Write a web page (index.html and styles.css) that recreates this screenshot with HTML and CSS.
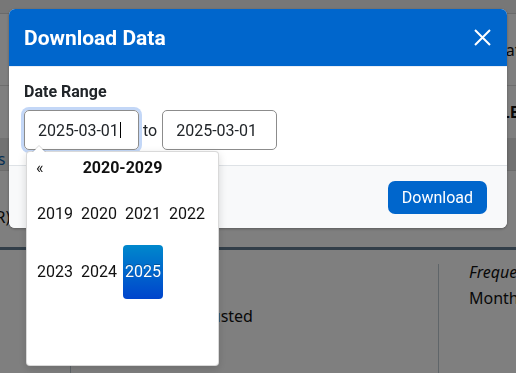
FILE: index.html
```html
<!DOCTYPE html>
<html lang="en">
<head>
    <meta charset="UTF-8">
    <title>Download Data</title>
    <link rel="stylesheet" href="styles.css">
</head>
<body>
    <div id="page">
        <div class="topbar"></div>
        <div class="thead"><span>Date</span></div>
        <div class="trow"><span>TABLE</span></div>
        <div class="tabs"><a class="tab_link" href="#">Details</a></div>
        <div class="units"><span>(USD/EUR)</span></div>
        <div class="rule"></div>
        <div class="cols">
            <div class="col_a"></div>
            <div class="col_b">Seasonally Adjusted</div>
            <div class="col_c">
                <em>Frequency</em>
                <div>Monthly</div>
            </div>
        </div>
    </div>

    <div class="backdrop"></div>

    <!-- 모달 -->
    <div class="modal">
        <header class="modal_header">
            <h5 class="modal_title">Download Data</h5>
            <button class="close" type="button">
                <svg width="17" height="17" viewBox="0 0 17 17">
                    <path d="M1 1 L16 16 M16 1 L1 16" stroke="#fff" stroke-width="2" fill="none"/>
                </svg>
            </button>
        </header>
        <div class="modal_body">
            <label class="range_label">Date Range</label>
            <div class="range">
                <div class="field focus">2025-03-01<span class="caret"></span></div>
                <span class="to">to</span>
                <div class="field">2025-03-01</div>
            </div>
        </div>
        <footer class="modal_footer">
            <button class="btn" type="button">Download</button>
        </footer>
    </div>

    <!-- 달력 (연도 선택) -->
    <div class="datepicker">
        <div class="dp_head">
            <span class="prev">&laquo;</span>
            <span class="switch">2020-2029</span>
            <span class="next"></span>
        </div>
        <div class="years">
            <span class="year">2019</span>
            <span class="year">2020</span>
            <span class="year">2021</span>
            <span class="year">2022</span>
            <span class="year">2023</span>
            <span class="year">2024</span>
            <span class="year active">2025</span>
        </div>
    </div>
</body>
</html>
```

FILE: styles.css
```css
/* 초기화 */
body {
    margin: 0;
    width: 516px;
    height: 373px;
    overflow: hidden;
    font-family: Roboto, "Liberation Sans", sans-serif;
    font-size: 16px;
    color: #212529;
}
a {text-decoration: none;}

/* 뒤 페이지 */
#page {
    width: 516px;
    font-family: "Noto Sans", "Liberation Sans", sans-serif;
    color: #111;
    background: #fff;
}
.topbar {
    height: 13px;
    background: #eeeeee;
    border-bottom: 1px solid #d4d4d4;
}
.thead {
    height: 71px;
    display: flex;
    align-items: center;
    padding-left: 494px;
    white-space: nowrap;
    border-bottom: 1px solid #dddddd;
}
.trow {
    height: 52px;
    padding-left: 471px;
    display: flex;
    align-items: center;
    font-weight: bold;
    white-space: nowrap;
}
.tabs {
    height: 32px;
    background: #e4e4e4;
    border-bottom: 1px solid #d8d8d8;
    display: flex;
    align-items: flex-end;
    white-space: nowrap;
}
.tab_link {
    color: #0b5fa8;
    margin-left: -46px;
    line-height: 18px;
    padding-bottom: 2px;
}
.units {
    height: 73px;
    padding-top: 18px;
    box-sizing: border-box;
    display: flex;
    align-items: center;
    white-space: nowrap;
}
.units span {margin-left: -68px;}
.rule {
    height: 3px;
    background: #647d92;
    margin-top: 3px;
}
.cols {
    display: flex;
    height: 130px;
    margin-top: 9px;
}
.col_a {
    flex-shrink: 0;
    width: 70px;
    margin-top: 5px;
    border-right: 1px solid #bfcbd2;
}
.col_b {
    flex-shrink: 0;
    width: 368px;
    margin-top: 5px;
    padding: 39px 0 0 32px;
    box-sizing: border-box;
    line-height: 26px;
    border-right: 1px solid #bfcbd2;
}
.col_c {
    padding-left: 30px;
    line-height: 26px;
    white-space: nowrap;
}

.backdrop {
    position: fixed;
    inset: 0;
    background: rgba(0, 0, 0, 0.5);
}

/* 모달 */
.modal {
    position: fixed;
    left: 9px;
    top: 9px;
    width: 498px;
    background: #fff;
    border-radius: 6px;
    overflow: hidden;
    box-shadow: 0 1px 3px rgba(0, 0, 0, 0.3);
}
.modal_header {
    height: 57px;
    background: #0066cc;
    display: flex;
    align-items: center;
    justify-content: space-between;
    padding: 0 16px 0 15px;
    border-bottom: 1px solid #e8eef6;
}
.modal_title {
    margin: 0;
    color: #fff;
    font-size: 21px;
    font-weight: bold;
}
.close {
    border: 0;
    background: none;
    padding: 0;
    width: 17px;
    height: 17px;
    display: block;
}
.close svg {display: block;}
.modal_body {
    padding: 15px 15px 15px;
}
.range_label {
    display: block;
    font-weight: bold;
    line-height: 19px;
    margin-bottom: 9px;
}
.range {
    display: flex;
    align-items: center;
}
.field {
    width: 115px;
    height: 40px;
    box-sizing: border-box;
    border: 1px solid #8c8c8c;
    border-radius: 5px;
    padding-left: 13px;
    display: flex;
    align-items: center;
    color: #212529;
}
.field.focus {
    box-shadow: 0 0 0 3px #c3d7f7;
}
.caret {
    width: 1px;
    height: 16px;
    background: #000;
    margin-left: 1px;
}
.to {margin: 0 5px 0 4px;}
.modal_footer {
    height: 62px;
    background: #f8f9fa;
    border-top: 1px solid #dee2e6;
    display: flex;
    align-items: center;
    justify-content: flex-end;
    padding-right: 20px;
}
.btn {
    height: 33px;
    padding: 0 14px;
    border: 0;
    border-radius: 7px;
    background: #0066cc;
    color: #fff;
    font-family: Roboto, sans-serif;
    font-size: 16px;
}

/* 달력 */
.datepicker {
    position: fixed;
    left: 26px;
    top: 151px;
    width: 193px;
    height: 215px;
    box-sizing: border-box;
    padding: 4px;
    background: #fff;
    border: 1px solid rgba(0, 0, 0, 0.15);
    border-radius: 4px;
    box-shadow: 0 3px 8px rgba(0, 0, 0, 0.15);
    color: #111;
}
/* 위쪽 화살표 */
.datepicker::before {
    content: '';
    position: absolute;
    top: -7px;
    left: 5px;
    border-left: 7px solid transparent;
    border-right: 7px solid transparent;
    border-bottom: 7px solid rgba(0, 0, 0, 0.15);
}
.datepicker::after {
    content: '';
    position: absolute;
    top: -6px;
    left: 6px;
    border-left: 6px solid transparent;
    border-right: 6px solid transparent;
    border-bottom: 6px solid #fff;
}
.dp_head {
    height: 22px;
    margin-bottom: 7px;
    display: grid;
    grid-template-columns: 30px 1fr 30px;
    align-items: center;
}
.prev {padding-left: 5px;}
.switch {
    text-align: center;
    font-weight: bold;
}
.years {
    display: grid;
    grid-template-columns: repeat(4, 40px);
    grid-template-rows: repeat(3, 54px);
    gap: 4px;
    padding: 2px 4px;
}
.year {
    text-align: center;
    line-height: 54px;
    border-radius: 4px;
}
.year.active {
    background: linear-gradient(to bottom, #0088cc, #0044cc);
    color: #fff;
    text-shadow: 0 -1px 0 rgba(0, 0, 0, 0.25);
}
```
